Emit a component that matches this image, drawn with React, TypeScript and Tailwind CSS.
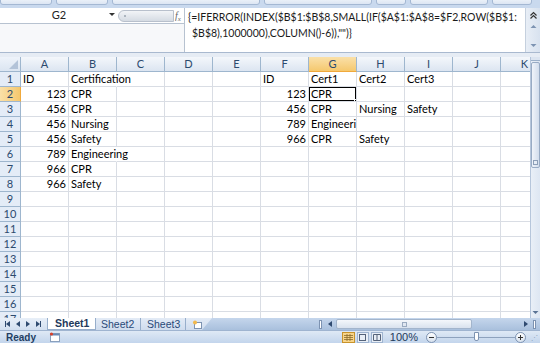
import React from 'react';

type Cell = { v: string; num?: boolean; over?: boolean };

const COLS = ['A', 'B', 'C', 'D', 'E', 'F', 'G', 'H', 'I', 'J', 'K'];

const DATA: Record<number, Record<string, Cell>> = {
    1: { A: { v: 'ID' }, B: { v: 'Certification', over: true }, F: { v: 'ID' }, G: { v: 'Cert1' }, H: { v: 'Cert2' }, I: { v: 'Cert3' } },
    2: { A: { v: '123', num: true }, B: { v: 'CPR' }, F: { v: '123', num: true }, G: { v: 'CPR' } },
    3: { A: { v: '456', num: true }, B: { v: 'CPR' }, F: { v: '456', num: true }, G: { v: 'CPR' }, H: { v: 'Nursing' }, I: { v: 'Safety' } },
    4: { A: { v: '456', num: true }, B: { v: 'Nursing' }, F: { v: '789', num: true }, G: { v: 'Engineering' } },
    5: { A: { v: '456', num: true }, B: { v: 'Safety' }, F: { v: '966', num: true }, G: { v: 'CPR' }, H: { v: 'Safety' } },
    6: { A: { v: '789', num: true }, B: { v: 'Engineering', over: true } },
    7: { A: { v: '966', num: true }, B: { v: 'CPR' } },
    8: { A: { v: '966', num: true }, B: { v: 'Safety' } },
};

const ROWS = Array.from({ length: 17 }, (_, i) => i + 1);

const Ribbon = () => (
    <div className="h-[8px] flex gap-[4px] bg-[#c9d9ee] overflow-hidden">
        {[52, 52, 148, 108, 30, 78, 40].map((w, i) => (
            <div key={i} style={{ width: w }} className="h-[7px] -mt-[2px] rounded-b-[3px] border border-[#a4b8d3] bg-gradient-to-b from-[#eef3fa] to-[#dce6f3]" />
        ))}
    </div>
);

const FormulaBar = () => (
    <div className="h-[45px] flex bg-[#f6f7f9] border-b border-[#a9b9cf]">
        <div className="w-[184px] flex flex-col">
            <div className="h-[16px] flex items-center border-b border-[#b7c2d0] bg-white">
                <div className="w-[118px] flex items-center justify-center text-[11px] text-[#222] relative" style={{ fontFamily: 'Lato, sans-serif' }}>
                    G2
                    <span className="absolute right-[3px] top-[6px] w-0 h-0 border-l-[3px] border-r-[3px] border-t-[3px] border-l-transparent border-r-transparent border-t-[#333]" />
                </div>
                <div className="w-[56px] h-[12px] rounded-l-full bg-gradient-to-b from-[#f2f4f7] to-[#d5dbe3] border border-[#b8c0cc] flex items-center pl-[5px]">
                    <span className="w-[2px] h-[2px] rounded-full bg-[#9aa4b1]" />
                </div>
                <span className="ml-[1px] text-[10px] italic text-[#666]" style={{ fontFamily: '"Liberation Serif", serif' }}>f<sub className="text-[7px]">x</sub></span>
            </div>
            <div className="flex-1 bg-[#f7f8fa]" />
        </div>
        <div className="flex-1 bg-white border-l border-[#b7c2d0] pl-[3px] pt-[1px] text-[10.5px] leading-[16px] text-[#1a1a1a] whitespace-nowrap overflow-hidden" style={{ fontFamily: 'Lato, sans-serif' }}>
            <div>{'{=IFERROR(INDEX($B$1:$B$8,SMALL(IF($A$1:$A$8=$F2,ROW($B$1:'}</div>
            <div className="pl-[4px]">{'$B$8),1000000),COLUMN()-6)),"")}'}</div>
        </div>
        <div className="w-[15px] bg-gradient-to-r from-[#e8eef6] to-[#d8e2ef] border-l border-[#c5d0de] flex flex-col items-center">
            <svg width="9" height="9" viewBox="0 0 9 9" className="mt-[3px]">
                <path d="M1.5 4.5 L4.5 1.5 L7.5 4.5 M1.5 7.5 L4.5 4.5 L7.5 7.5" fill="none" stroke="#333" strokeWidth="1.2" />
            </svg>
            <svg width="7" height="5" viewBox="0 0 7 5" className="mt-[4px]"><path d="M0.5 4 L3.5 1 L6.5 4 Z" fill="#7d93b2" /></svg>
            <svg width="7" height="5" viewBox="0 0 7 5" className="mt-auto mb-[4px]"><path d="M0.5 1 L3.5 4 L6.5 1 Z" fill="#7d93b2" /></svg>
        </div>
    </div>
);

const headerCls = 'flex items-center justify-center border-r border-b border-[#9eb6ce] text-[11px] text-[#2c4a6e]';

const Grid = () => (
    <div className="flex-1 flex overflow-hidden">
        <div className="w-[530px] overflow-hidden bg-white" style={{ fontFamily: 'Lato, sans-serif' }}>
            <div className="grid grid-cols-[21px_repeat(11,48px)] auto-rows-[15px] w-max">
                <div className="border-r border-b border-[#9eb6ce] bg-gradient-to-b from-[#eef3fa] to-[#dbe5f1] flex items-end justify-end p-[2px]">
                    <svg width="9" height="9" viewBox="0 0 9 9"><path d="M9 0 L9 9 L0 9 Z" fill="#b3c3d8" /></svg>
                </div>
                {COLS.map((c) => (
                    <div key={c} className={`${headerCls} ${c === 'G' ? 'bg-gradient-to-b from-[#fae0a8] to-[#f5c86d] border-b-[#f0a93c]' : 'bg-gradient-to-b from-[#f4f7fb] to-[#dce5f1]'}`}>
                        {c}
                    </div>
                ))}
                {ROWS.map((r) => (
                    <React.Fragment key={r}>
                        <div className={`${headerCls} ${r === 2 ? 'bg-gradient-to-r from-[#fae0a8] to-[#f5c86d] border-r-[#f0a93c]' : 'bg-[#e4ecf7]'}`}>
                            {r}
                        </div>
                        {COLS.map((c) => {
                            const cell = DATA[r]?.[c];
                            const sel = r === 2 && c === 'G';
                            return (
                                <div
                                    key={c}
                                    className={`relative border-b border-r border-[#d9dde4] text-[11px] leading-[14px] text-black whitespace-nowrap px-[2px] ${cell?.over ? 'overflow-visible border-r-transparent z-10' : 'overflow-hidden'} ${cell?.num ? 'text-right' : 'text-left'}`}
                                >
                                    {cell?.v}
                                    {sel && (
                                        <>
                                            <span className="absolute -left-px -top-px -right-px -bottom-px border-2 border-black pointer-events-none" />
                                            <span className="absolute -right-[3px] -bottom-[3px] w-[5px] h-[5px] bg-black border border-white z-20" />
                                        </>
                                    )}
                                </div>
                            );
                        })}
                    </React.Fragment>
                ))}
            </div>
        </div>
        <div className="w-[10px] bg-gradient-to-r from-[#e9eff7] to-[#dde6f2] border-l border-[#b6c6db] flex flex-col items-center">
            <div className="w-full h-[4px] border-b border-[#9cb0c9] bg-[#dbe4f0]" />
            <div className="w-[9px] h-[106px] mt-[1px] rounded-[2px] border border-[#98abc4] bg-gradient-to-r from-[#f0f4fa] to-[#d2ddec] flex items-end justify-center pb-[2px]">
                <span className="w-[5px] h-[5px] border border-[#8d9fb8] bg-[#e6edf6]" />
            </div>
            <svg width="7" height="5" viewBox="0 0 7 5" className="mt-auto mb-[3px]"><path d="M0.5 1 L3.5 4 L6.5 1 Z" fill="#5a7394" /></svg>
        </div>
    </div>
);

const Tri = ({ dir }: { dir: 'l' | 'r' }) => (
    <svg width="4" height="6" viewBox="0 0 4 6">
        <path d={dir === 'l' ? 'M4 0 L0 3 L4 6 Z' : 'M0 0 L4 3 L0 6 Z'} fill="#2f4a70" />
    </svg>
);

const TabBar = () => (
    <div className="h-[12px] flex bg-gradient-to-b from-[#c5d6ec] to-[#a9c0dd] text-[10.5px]" style={{ fontFamily: '"Liberation Sans", sans-serif' }}>
        <div className="w-[48px] flex items-center gap-[6px] pl-[5px] bg-gradient-to-b from-[#e8eff8] to-[#d2dff0] border-r border-[#97aecb]">
            <span className="flex items-center"><span className="w-px h-[6px] bg-[#2f4a70]" /><Tri dir="l" /></span>
            <Tri dir="l" />
            <Tri dir="r" />
            <span className="flex items-center"><Tri dir="r" /><span className="w-px h-[6px] bg-[#2f4a70]" /></span>
        </div>
        <div className="w-[164px] flex items-stretch bg-gradient-to-b from-[#e3ebf6] to-[#cfdcee] [clip-path:polygon(0_0,100%_0,calc(100%-10px)_100%,0_100%)]">
            <div className="w-[47px] pl-[7px] bg-white font-bold text-[#1e395b] flex items-center border-b border-[#97aecb] leading-none">Sheet1</div>
            <div className="w-[45px] pl-[5px] text-[#2a4a78] flex items-center border-l border-[#97aecb] leading-none">Sheet2</div>
            <div className="w-[45px] pl-[6px] text-[#2a4a78] flex items-center border-l border-[#97aecb] leading-none">Sheet3</div>
            <div className="pl-[6px] flex items-center border-l border-[#97aecb]">
                <svg width="11" height="9" viewBox="0 0 11 9">
                    <rect x="2.5" y="2.5" width="7" height="6" fill="#fff" stroke="#7d93b2" />
                    <circle cx="3" cy="2.5" r="2" fill="#f2b84b" />
                </svg>
            </div>
        </div>
        <div className="flex-1 flex items-center pl-[107px]">
            <span className="w-[3px] h-[9px] bg-white border border-[#7d93b2]" />
            <span className="ml-[6px]"><Tri dir="l" /></span>
            <div className="ml-[4px] w-[136px] h-[10px] rounded-[2px] border border-[#a3b5cc] bg-gradient-to-b from-[#f4f7fb] to-[#d9e2ee] flex items-center justify-center">
                <span className="w-[5px] h-[5px] border border-[#9aaac0] bg-[#e0e7f1]" />
            </div>
            <span className="ml-auto"><Tri dir="r" /></span>
            <span className="ml-[5px] mr-[4px] w-[3px] h-[9px] bg-white border border-[#7d93b2]" />
        </div>
    </div>
);

const StatusBar = () => (
    <div className="h-[13px] flex items-center bg-gradient-to-b from-[#dfe9f5] to-[#c3d5ec] border-t border-[#9fb4d0] text-[10px] text-[#1e395b]" style={{ fontFamily: '"Liberation Sans", sans-serif' }}>
        <span className="ml-[6px] font-bold text-[#233e63]">Ready</span>
        <svg width="12" height="10" viewBox="0 0 12 10" className="ml-[13px]">
            <rect x="1.5" y="1.5" width="9" height="8" fill="#fff" stroke="#8aa0bd" />
            <rect x="1.5" y="1.5" width="9" height="2" fill="#6b8ab3" />
            <circle cx="2.5" cy="2" r="1.6" fill="#d9412b" />
        </svg>
        <div className="ml-auto flex items-center gap-[2px]">
            <span className="w-[13px] h-[11px] border border-[#c8932b] bg-[#f8d58a] flex items-center justify-center">
                <svg width="9" height="7" viewBox="0 0 9 7"><path d="M0 1.5 H9 M0 3.5 H9 M0 5.5 H9 M3 0 V7 M6 0 V7" stroke="#8a6a2a" strokeWidth="0.8" /></svg>
            </span>
            <span className="w-[12px] h-[11px] border border-[#9fb4d0] bg-[#e8eef6] flex items-center justify-center">
                <span className="w-[7px] h-[7px] border border-[#55637a]" />
            </span>
            <span className="w-[12px] h-[11px] border border-[#9fb4d0] bg-[#e8eef6] flex items-center justify-center">
                <svg width="8" height="7" viewBox="0 0 8 7"><path d="M0.5 0.5 H7.5 V6.5 H0.5 Z M4 0.5 V6.5" fill="none" stroke="#55637a" /></svg>
            </span>
        </div>
        <span className="ml-[7px] text-[11px]">100%</span>
        <span className="ml-[8px] w-[11px] h-[11px] rounded-full border border-[#7d93b2] bg-gradient-to-b from-white to-[#d6e0ed] flex items-center justify-center">
            <span className="w-[5px] h-px bg-[#333]" />
        </span>
        <div className="w-[78px] relative flex items-center">
            <span className="w-full h-px bg-[#8ea2bd]" />
            <span className="absolute left-[37px] top-[-5px] w-[5px] h-[9px] rounded-b-[2px] border border-[#7d93b2] bg-white" />
        </div>
        <span className="w-[11px] h-[11px] rounded-full border border-[#7d93b2] bg-gradient-to-b from-white to-[#d6e0ed] flex items-center justify-center relative">
            <span className="w-[5px] h-px bg-[#333]" />
            <span className="absolute w-px h-[5px] bg-[#333]" />
        </span>
        <span className="ml-[5px] mr-[1px] w-[8px] text-[7px] text-[#8ea2bd] leading-none">⋰</span>
    </div>
);

export default function App() {
    return (
        <div className="w-[540px] h-[343px] overflow-hidden flex flex-col bg-[#dbe5f1]">
            <Ribbon />
            <FormulaBar />
            <div className="h-[4px] bg-[#e6ecf4]" />
            <Grid />
            <TabBar />
            <StatusBar />
        </div>
    );
}
